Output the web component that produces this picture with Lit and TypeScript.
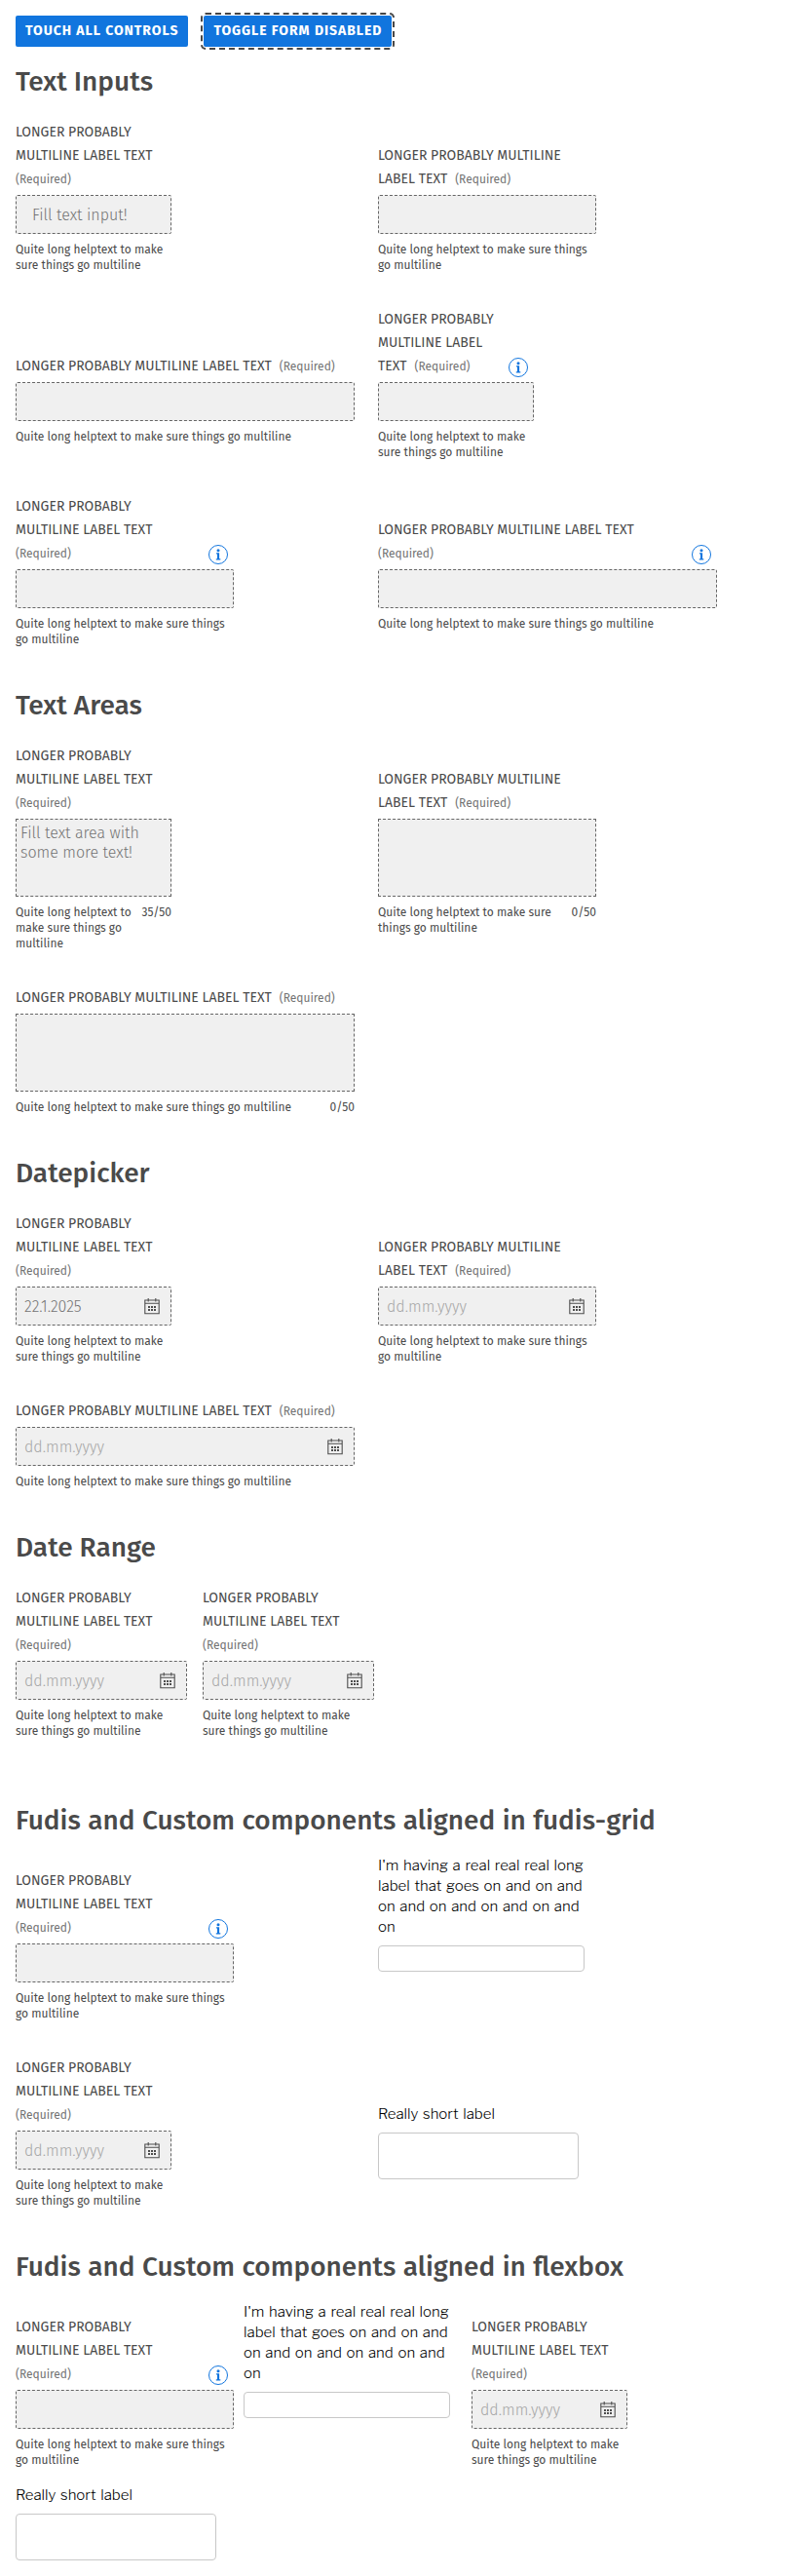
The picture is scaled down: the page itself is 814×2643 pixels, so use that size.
import { LitElement, html, css, nothing, TemplateResult } from "lit";
import { customElement } from "lit/decorators.js";
import { classMap } from "lit/directives/class-map.js";

type Size = "sm" | "md" | "lg" | "range";
type Kind = "text" | "area" | "date";

interface Field {
  kind: Kind;
  size: Size;
  label: string[];
  help: string[];
  value?: string;
  count?: string;
  info?: boolean;
}

const L3 = ["LONGER PROBABLY", "MULTILINE LABEL TEXT", ""];
const L2 = ["LONGER PROBABLY MULTILINE", "LABEL TEXT"];
const L1 = ["LONGER PROBABLY MULTILINE LABEL TEXT"];
const HELP_SM = ["Quite long helptext to make", "sure things go multiline"];
const HELP_MD = ["Quite long helptext to make sure things", "go multiline"];
const HELP_LG = ["Quite long helptext to make sure things go multiline"];
const LONG_LABEL = [
  "I'm having a real real real long",
  "label that goes on and on and",
  "on and on and on and on and",
  "on",
];

const textInputs: Field[] = [
  { kind: "text", size: "sm", label: L3, help: HELP_SM, value: "Fill text input!" },
  { kind: "text", size: "md", label: L2, help: HELP_MD },
  { kind: "text", size: "lg", label: L1, help: HELP_LG },
  { kind: "text", size: "sm", label: ["LONGER PROBABLY", "MULTILINE LABEL", "TEXT"], help: HELP_SM, info: true },
  { kind: "text", size: "md", label: L3, help: HELP_MD, info: true },
  { kind: "text", size: "lg", label: [...L1, ""], help: HELP_LG, info: true },
];

const textAreas: Field[] = [
  {
    kind: "area",
    size: "sm",
    label: L3,
    help: ["Quite long helptext to", "make sure things go", "multiline"],
    value: "Fill text area with\nsome more text!",
    count: "35/50",
  },
  {
    kind: "area",
    size: "md",
    label: L2,
    help: ["Quite long helptext to make sure", "things go multiline"],
    count: "0/50",
  },
  { kind: "area", size: "lg", label: L1, help: HELP_LG, count: "0/50" },
];

const dates: Field[] = [
  { kind: "date", size: "sm", label: L3, help: HELP_SM, value: "22.1.2025" },
  { kind: "date", size: "md", label: L2, help: HELP_MD },
  { kind: "date", size: "lg", label: L1, help: HELP_LG },
];

const range: Field = { kind: "date", size: "range", label: L3, help: HELP_SM };
const infoField: Field = { kind: "text", size: "md", label: L3, help: HELP_MD, info: true };
const dateField: Field = { kind: "date", size: "sm", label: L3, help: HELP_SM };

@customElement("app-root")
export class AppRoot extends LitElement {
  static styles = css`
    :host {
      display: block;
      box-sizing: border-box;
      padding: 16px;
      background: #fff;
      color: #4a4a4a;
      font-family: "Fira Sans", "Noto Sans", sans-serif;
      font-size: 14px;
    }
    * {
      box-sizing: border-box;
    }
    .actions {
      display: flex;
      gap: 16px;
    }
    .btn {
      height: 32px;
      padding: 0 10px;
      border: 0;
      border-radius: 2px;
      background: #1175de;
      color: #fff;
      font: 700 14px/32px "Fira Sans", "Noto Sans", sans-serif;
      letter-spacing: 0.97px;
      white-space: nowrap;
    }
    .focused {
      outline: 2px dashed #474747;
      outline-offset: 1px;
    }
    h2 {
      margin: 42px 0 0;
      font-size: 28px;
      font-weight: 500;
      line-height: 36px;
      white-space: nowrap;
    }
    .actions + h2 {
      margin-top: 18px;
    }
    h2.long {
      word-spacing: 0.4px;
    }
    h2.spaced {
      margin-top: 66px;
    }
    .grid,
    .pair,
    .flex {
      display: grid;
      margin-top: 22px;
      justify-content: start;
    }
    .grid {
      grid-template-columns: 348px 348px;
      column-gap: 24px;
    }
    .pair {
      grid-template-columns: 176px 176px;
      column-gap: 16px;
    }
    .flex {
      grid-template-columns: 224px 212px 160px;
      column-gap: 10px;
    }
    .mixed {
      margin-top: 18px;
    }
    .field {
      display: grid;
      grid-row: span 2;
      grid-template-rows: subgrid;
      row-gap: 0;
      align-content: start;
    }
    .grid > .field:nth-child(n + 3) {
      padding-top: 36px;
    }
    .flex > .field:nth-child(3) {
      margin-left: 12px;
      margin-right: -12px;
    }
    .flex > .field:nth-child(4) {
      padding-top: 18px;
    }
    .sm {
      width: 160px;
    }
    .md {
      width: 224px;
    }
    .lg {
      width: 348px;
    }
    .range {
      width: 176px;
    }
    .labelrow {
      display: flex;
      align-self: end;
      align-items: flex-end;
      justify-content: space-between;
      padding-bottom: 4px;
    }
    .label {
      line-height: 24px;
      white-space: nowrap;
    }
    .line {
      display: flex;
      gap: 8px;
      height: 24px;
    }
    .required {
      color: #737373;
      font-size: 12px;
      line-height: 25px;
    }
    .info {
      display: block;
      margin: 0 6px 1px 0;
    }
    .control {
      display: flex;
      align-items: center;
      justify-content: space-between;
      height: 40px;
      padding: 0 11px 0 8px;
      border: 1px dashed #666;
      border-radius: 2px;
      background: #f0f0f0;
      color: #737373;
      font-size: 16px;
      font-weight: 300;
      white-space: pre;
    }
    .control.text {
      padding-left: 16px;
    }
    .control.area {
      height: 80px;
      align-items: flex-start;
      padding: 4px;
      border-radius: 0;
      line-height: 20px;
    }
    .placeholder {
      color: #a6a6a6;
    }
    .calendar {
      display: block;
    }
    .foot {
      display: flex;
      justify-content: space-between;
      margin-top: 8px;
      font-size: 12px;
      line-height: 16px;
      white-space: nowrap;
    }
    .custom {
      color: #000;
      font-family: "Libre Franklin", "Liberation Sans", sans-serif;
      font-size: 15px;
      font-weight: 350;
      line-height: 21px;
      word-spacing: 1.4px;
      white-space: nowrap;
    }
    .customlabel {
      align-self: end;
      padding-bottom: 6px;
    }
    .box {
      margin-top: 2px;
      border: 1px solid #c8c8c8;
      border-radius: 4px;
    }
    .box.short {
      width: 212px;
      height: 27px;
    }
    .box.tall {
      width: 206px;
      height: 48px;
    }
  `;

  private infoIcon() {
    return html`<svg class="info" width="20" height="20" viewBox="0 0 20 20" fill="none">
      <circle cx="10" cy="10" r="9.5" stroke="#1175de" />
      <circle cx="10" cy="5.7" r="1.5" fill="#1175de" />
      <path d="M8 8.3h3.1v5.9h1.2v1.3H7.8v-1.3H9V9.6H8z" fill="#1175de" />
    </svg>`;
  }

  private calendarIcon() {
    return html`<svg class="calendar" width="16" height="18" viewBox="0 0 16 18" fill="none">
      <path d="M.8 3h14.4v13.7H.8zM.8 6.2h14.4M4.2 1v3.6M11.8 1v3.6" stroke="#4d4d4d" stroke-width="1.1" />
      <path
        d="M4 9h2v2H4zM7 9h2v2H7zM10 9h2v2h-2zM4 12h2v2H4zM7 12h2v2H7zM10 12h2v2h-2z"
        fill="#4d4d4d"
      />
    </svg>`;
  }

  private field(f: Field): TemplateResult {
    const last = f.label.length - 1;
    const content = f.value ?? (f.kind === "date" ? "dd.mm.yyyy" : "");
    return html`<div class="field">
      <div class="labelrow ${f.size}">
        <div class="label">
          ${f.label.map(
            (t, i) => html`<div class="line">
              ${t ? html`<span>${t}</span>` : nothing}
              ${i === last ? html`<span class="required">(Required)</span>` : nothing}
            </div>`
          )}
        </div>
        ${f.info ? this.infoIcon() : nothing}
      </div>
      <div class=${f.size}>
        <div class=${classMap({ control: true, [f.kind]: true })}><span
          class=${classMap({ placeholder: f.kind === "date" && !f.value })}>${content}</span>${
          f.kind === "date" ? this.calendarIcon() : nothing}</div>
        <div class="foot">
          <div>${f.help.map((h) => html`<div>${h}</div>`)}</div>
          ${f.count ? html`<span>${f.count}</span>` : nothing}
        </div>
      </div>
    </div>`;
  }

  private custom(label: string[], shape: "short" | "tall") {
    return html`<div class="field custom">
      <div class="customlabel">${label.map((l) => html`<div>${l}</div>`)}</div>
      <div class="box ${shape}"></div>
    </div>`;
  }

  render() {
    return html`
      <div class="actions">
        <button class="btn">TOUCH ALL CONTROLS</button>
        <button class="btn focused">TOGGLE FORM DISABLED</button>
      </div>
      <h2>Text Inputs</h2>
      <div class="grid">${textInputs.map((f) => this.field(f))}</div>
      <h2>Text Areas</h2>
      <div class="grid">${textAreas.map((f) => this.field(f))}</div>
      <h2>Datepicker</h2>
      <div class="grid">${dates.map((f) => this.field(f))}</div>
      <h2>Date Range</h2>
      <div class="pair">${this.field(range)}${this.field(range)}</div>
      <h2 class="long spaced">Fudis and Custom components aligned in fudis-grid</h2>
      <div class="grid mixed">
        ${this.field(infoField)}${this.custom(LONG_LABEL, "short")}
        ${this.field(dateField)}${this.custom(["Really short label"], "tall")}
      </div>
      <h2 class="long">Fudis and Custom components aligned in flexbox</h2>
      <div class="flex mixed">
        ${this.field(infoField)}${this.custom(LONG_LABEL, "short")}${this.field(dateField)}
        ${this.custom(["Really short label"], "tall")}
      </div>
    `;
  }
}
